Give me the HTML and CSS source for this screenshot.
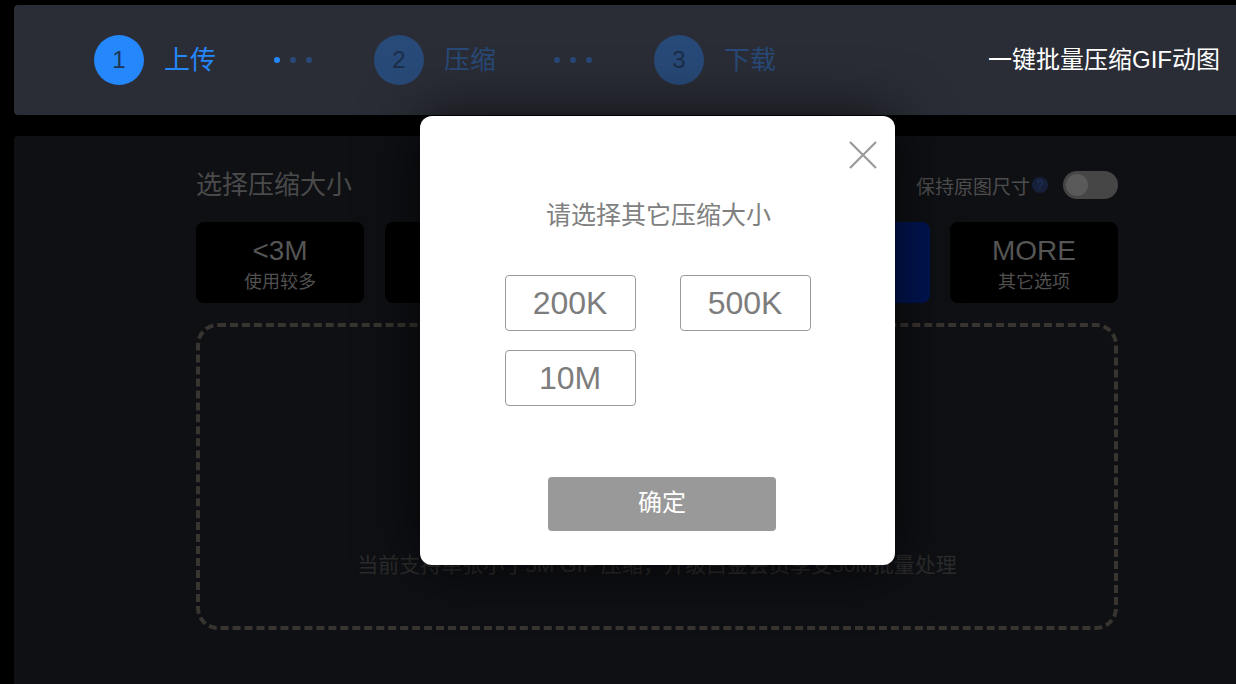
FILE: index.html
```html
<!DOCTYPE html>
<html lang="zh">
<head>
<meta charset="utf-8">
<title>一键批量压缩GIF动图</title>
<link rel="stylesheet" href="styles.css">
</head>
<body>
<div class="page">
  <header class="header">
    <div class="steps">
      <div class="step active">
        <span class="circle">1</span><span class="label">上传</span>
      </div>
      <div class="dots"><i class="on"></i><i></i><i></i></div>
      <div class="step">
        <span class="circle">2</span><span class="label">压缩</span>
      </div>
      <div class="dots"><i></i><i></i><i></i></div>
      <div class="step">
        <span class="circle">3</span><span class="label">下载</span>
      </div>
    </div>
    <div class="slogan">一键批量压缩GIF动图</div>
  </header>

  <main class="panel">
    <div class="content">
      <div class="title-row">
        <div class="title">选择压缩大小</div>
        <div class="keep">
          <span>保持原图尺寸</span>
          <span class="help">?</span>
          <span class="toggle"><span class="knob"></span></span>
        </div>
      </div>
      <div class="cards">
        <div class="card"><div class="big">&lt;3M</div><div class="small">使用较多</div></div>
        <div class="card"><div class="big">&lt;5M</div><div class="small">推荐</div></div>
        <div class="card"><div class="big">&lt;1M</div><div class="small">微信表情</div></div>
        <div class="card selected"><div class="big">&lt;2M</div><div class="small">常用</div></div>
        <div class="card"><div class="big">MORE</div><div class="small">其它选项</div></div>
      </div>
      <div class="drop">
        <div class="drop-text">当前支持单张小于5M GIF 压缩，升级白金会员享受50M批量处理</div>
      </div>
    </div>
  </main>

  <div class="modal">
    <svg class="close" viewBox="0 0 28 28" width="28" height="28"><path d="M1 1L27 27M27 1L1 27" stroke="#9a9a9a" stroke-width="2.2" fill="none"/></svg>
    <div class="modal-title">请选择其它压缩大小</div>
    <div class="options">
      <div class="opt">200K</div>
      <div class="opt">500K</div>
      <div class="opt">10M</div>
    </div>
    <div class="confirm">确定</div>
  </div>
</div>
</body>
</html>
```

FILE: styles.css
```css
* { box-sizing: border-box; }
html, body {
  margin: 0;
  padding: 0;
  background: #000;
  height: 100%;
  overflow: hidden;
  font-family: "Liberation Sans", "Noto Sans CJK SC", sans-serif;
}
.page {
  position: relative;
  padding: 5px 0 0 14px;
  height: 684px;
}
.header {
  height: 110px;
  background: #2b2d36;
  border-radius: 4px 0 0 4px;
  display: flex;
  align-items: center;
  justify-content: space-between;
  padding: 0 16px 0 80px;
}
.steps {
  display: flex;
  align-items: center;
}
.step {
  display: flex;
  align-items: center;
}
.circle {
  width: 50px;
  height: 50px;
  border-radius: 50%;
  background: #284a78;
  color: #1c2d47;
  font-size: 24px;
  display: flex;
  align-items: center;
  justify-content: center;
}
.label {
  margin-left: 20px;
  font-size: 26px;
  line-height: 32px;
  color: #284a78;
  width: 52px;
}
.step.active .circle { background: #2487fb; color: #1f3552; }
.step.active .label { color: #2487fb; }
.dots {
  display: flex;
  align-items: center;
  gap: 10px;
  margin: 0 62px 0 58px;
}
.dots i {
  width: 6px;
  height: 6px;
  border-radius: 50%;
  background: #284a78;
  display: block;
}
.dots i.on { background: #2487fb; }
.slogan {
  color: #fff;
  font-size: 24px;
  line-height: 30px;
}

.panel {
  margin-top: 21px;
  height: 560px;
  background: #0f1014;
  border-radius: 4px 0 0 0;
  padding: 34px 0 0 182px;
}
.content { width: 922px; }
.title-row {
  display: flex;
  align-items: center;
  justify-content: space-between;
  height: 30px;
}
.title {
  font-size: 26px;
  line-height: 30px;
  color: #4a4a4a;
}
.keep {
  display: flex;
  align-items: center;
  font-size: 19px;
  color: #4d4d4d;
}
.help {
  width: 16px;
  height: 16px;
  border-radius: 50%;
  background: #17203a;
  color: #24325a;
  font-size: 12px;
  display: flex;
  align-items: center;
  justify-content: center;
  margin-left: 2px;
}
.toggle {
  width: 55px;
  height: 28px;
  border-radius: 14px;
  background: #464646;
  margin-left: 15px;
  padding: 3px;
  display: flex;
}
.knob {
  width: 22px;
  height: 22px;
  border-radius: 50%;
  background: #5a5a5a;
}
.cards {
  display: flex;
  justify-content: space-between;
  margin-top: 22px;
}
.card {
  width: 168px;
  height: 81px;
  background: #000;
  border-radius: 8px;
  display: flex;
  flex-direction: column;
  align-items: center;
  justify-content: center;
  padding-top: 4px;
  color: #555;
}
.card.selected { background: #001452; }
.big { font-size: 28px; line-height: 32px; }
.small { font-size: 18px; line-height: 24px; color: #505050; margin-top: 3px; }
.drop {
  margin-top: 20px;
  height: 307px;
  border: 4px dashed #38342f;
  border-radius: 22px;
  display: flex;
  flex-direction: column;
  justify-content: flex-end;
  align-items: center;
  padding-bottom: 46px;
}
.drop-text {
  font-size: 21px;
  line-height: 30px;
  color: #2b2b2b;
}

.modal {
  position: absolute;
  left: 420px;
  top: 116px;
  width: 475px;
  height: 449px;
  background: #fff;
  border-radius: 12px;
  box-shadow: 0 0 60px rgba(0,0,0,0.7);
  display: flex;
  flex-direction: column;
}
.close {
  position: absolute;
  top: 25px;
  right: 18px;
}
.modal-title {
  margin-top: 82px;
  text-align: center;
  font-size: 25px;
  line-height: 34px;
  color: #808080;
  padding-left: 2px;
}
.options {
  margin: 43px auto 0;
  display: grid;
  grid-template-columns: 131px 131px;
  column-gap: 44px;
  row-gap: 19px;
}
.opt {
  height: 56px;
  border: 1px solid #9a9a9a;
  border-radius: 4px;
  display: flex;
  align-items: center;
  justify-content: center;
  font-size: 32px;
  color: #7d7d7d;
}
.confirm {
  margin: 71px 0 0 128px;
  width: 228px;
  height: 54px;
  background: #999;
  border-radius: 4px;
  color: #fff;
  font-size: 24px;
  line-height: 24px;
  padding-bottom: 2px;
  display: flex;
  align-items: center;
  justify-content: center;
}
```
